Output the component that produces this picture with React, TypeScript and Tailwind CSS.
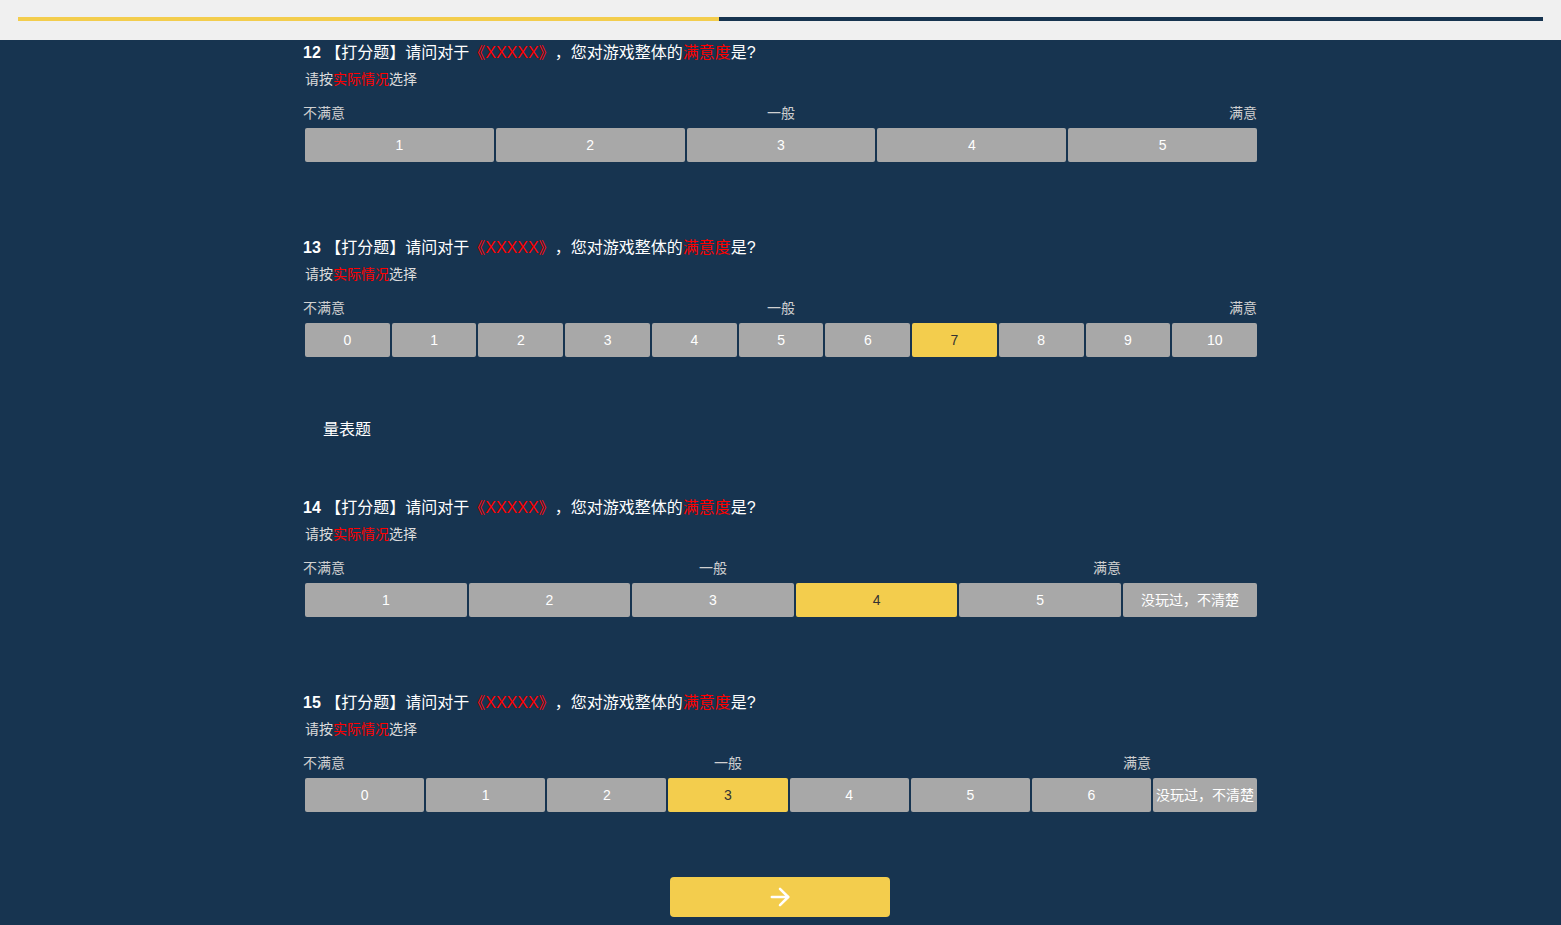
import React from 'react';
import { ArrowRight } from 'lucide-react';

interface ScoreQuestionProps {
  num: number;
  options: string[];
  selected?: string;
  extra?: { label: string; width: string };
}

const FONT = { fontFamily: '"Liberation Sans", "Noto Sans CJK SC", sans-serif' };

const OptionButton: React.FC<{ label: string; active: boolean; className?: string }> = ({
  label,
  active,
  className = '',
}) => (
  <div
    className={`h-[34px] rounded-[2px] flex items-center justify-center text-[14px] whitespace-nowrap ${
      active ? 'bg-[#f3cd4d] text-[#333]' : 'bg-[#a8a8a8] text-white'
    } ${className}`}
  >
    {label}
  </div>
);

const ScoreQuestion: React.FC<ScoreQuestionProps> = ({ num, options, selected, extra }) => (
  <div>
    {/* Title */}
    <div className="h-[26px] leading-[26px] text-[16px] text-white whitespace-nowrap [text-spacing-trim:space-all]">
      <span className="font-bold">{num}</span> 【打分题】请问对于
      <span className="text-[#ff0000]">《XXXXX》</span>，您对游戏整体的
      <span className="text-[#ff0000]">满意度</span>是?
    </div>
    <div className="mt-[3px] h-[20px] leading-[20px] text-[14px] text-[#dcdcdc] pl-[2px]">
      请按<span className="text-[#ff0000]">实际情况</span>选择
    </div>

    {/* Scale labels + options */}
    <div className="mt-[15px] flex">
      <div className="flex-1 flex flex-col">
        <div className="h-[18px] leading-[18px] text-[14px] text-[#d0d0d0] grid grid-cols-3">
          <span className="text-left">不满意</span>
          <span className="text-center pl-[2px]">一般</span>
          <span className="text-right">满意</span>
        </div>
        <div className="mt-[6px] flex gap-[2px] pl-[2px]">
          {options.map((o) => (
            <OptionButton key={o} label={o} active={o === selected} className="flex-1" />
          ))}
        </div>
      </div>
      {extra && (
        <div className="flex flex-col ml-[2px]">
          <div className="h-[18px]" />
          <div className="mt-[6px]">
            <OptionButton label={extra.label} active={false} className={extra.width} />
          </div>
        </div>
      )}
    </div>
  </div>
);

export default function App() {
  return (
    <div className="min-h-[925px] bg-[#173450]" style={FONT}>
      {/* Progress header */}
      <div className="h-10 bg-[#f0f0f0] px-[18px] pt-[17px]">
        <div className="h-1 bg-[#173450] flex">
          <div className="w-[701px] bg-[#f3cd4d]" />
        </div>
      </div>

      <div className="w-[955px] mx-auto pr-[1px] pb-[8px]">
        <ScoreQuestion num={12} options={['1', '2', '3', '4', '5']} />
        <div className="h-[73px]" />
        <ScoreQuestion
          num={13}
          options={['0', '1', '2', '3', '4', '5', '6', '7', '8', '9', '10']}
          selected="7"
        />

        <div className="mt-[60px] pl-[20px] h-[26px] leading-[26px] text-[16px] text-white">量表题</div>

        <div className="h-[52px]" />
        <ScoreQuestion
          num={14}
          options={['1', '2', '3', '4', '5']}
          selected="4"
          extra={{ label: '没玩过，不清楚', width: 'w-[134px]' }}
        />
        <div className="h-[73px]" />
        <ScoreQuestion
          num={15}
          options={['0', '1', '2', '3', '4', '5', '6']}
          selected="3"
          extra={{ label: '没玩过，不清楚', width: 'w-[104px]' }}
        />

        {/* Next */}
        <div className="mt-[65px] flex justify-center">
          <button className="w-[220px] h-[40px] rounded-[4px] bg-[#f3cd4d] flex items-center justify-center text-white">
            <ArrowRight size={28} strokeWidth={2.2} />
          </button>
        </div>
      </div>
    </div>
  );
}
